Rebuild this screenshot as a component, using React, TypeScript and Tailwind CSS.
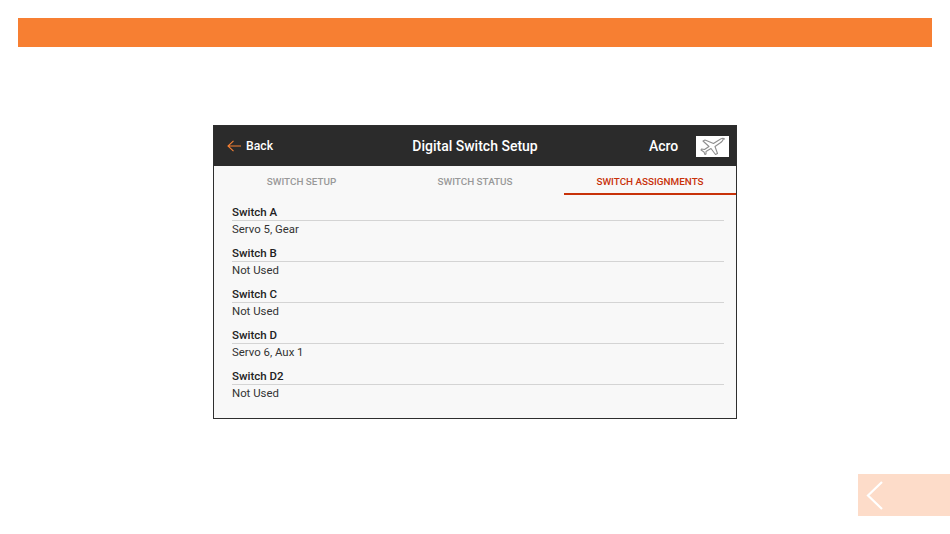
import React from 'react';

const rows = [
    {name: 'Switch A', value: 'Servo 5, Gear'},
    {name: 'Switch B', value: 'Not Used'},
    {name: 'Switch C', value: 'Not Used'},
    {name: 'Switch D', value: 'Servo 6, Aux 1'},
    {name: 'Switch D2', value: 'Not Used'},
];

const App: React.FC = () => {
    return (
        <div className="w-[950px] h-[534px] bg-white flex flex-col overflow-hidden font-['Roboto',sans-serif]">
            {/* Orange title bar */}
            <div className="mt-[18px] mx-[18px] h-[29px] bg-[#f77f32] shrink-0"/>

            {/* Device screen */}
            <div className="mt-[78px] ml-[213px] w-[524px] h-[294px] border-[1.5px] border-[#2e2e2e] bg-[#f8f8f8] flex flex-col shrink-0">
                <header className="h-[40px] bg-[#2b2b2b] flex items-center shrink-0 text-white">
                    <div className="w-[160px] flex items-center pl-[13px] gap-[5px]">
                        <svg width="14" height="12" viewBox="0 0 14 12" fill="none" stroke="#f78033" strokeWidth="1.1">
                            <path d="M14 6H1M6.500 .8 1 6l5.500 5.200"/>
                        </svg>
                        <span className="text-[12.2px] font-medium">Back</span>
                    </div>
                    <div className="w-[202px] text-center text-[14px] font-medium whitespace-nowrap">Digital Switch Setup</div>
                    <div className="flex-1 flex items-center">
                        <span className="ml-[73px] text-[14px] font-medium">Acro</span>
                        <div className="ml-[18px] w-[33px] h-[21px] bg-white flex items-center justify-center">
                            <svg width="26" height="18" viewBox="0 0 26 18" fill="none" stroke="#8f8f8f" strokeWidth="1.1" strokeLinejoin="round">
                                <path d="M24.500 2c-1-1-3.500-.5-5.500 1l-5.500 3.500L5 3 3 4l6 5.500-4.500 3-3-.5-.5 1 3 2 1 2.500 1-.5 0-2.500 5-3 4.500 6 2-1-2.500-7 5-3.500c2-1.500 3.500-3 3-4z"/>
                            </svg>
                        </div>
                    </div>
                </header>

                <nav className="h-[29px] flex shrink-0 text-[9.9px] font-medium">
                    <div className="w-[175px] pt-[9px] text-center text-[#999999]">SWITCH SETUP</div>
                    <div className="w-[175px] pt-[9px] pr-[3px] text-center text-[#999999]">SWITCH STATUS</div>
                    <div className="flex-1 pt-[9px] text-center text-[#c8320a] border-b-2 border-[#c8320a]">SWITCH ASSIGNMENTS</div>
                </nav>

                <div className="pl-[18px] pr-[12px] pt-[9px] flex flex-col gap-[7px]">
                    {rows.map(row => (
                        <div key={row.name} className="h-[34px]">
                            <div className="h-[17px] pt-[1px] text-[11.5px] leading-[15px] font-medium text-[#222222] border-b-[1.5px] border-[#d4d4d4]">{row.name}</div>
                            <div className="pt-[1px] text-[11.4px] leading-[14px] text-[#333333]">{row.value}</div>
                        </div>
                    ))}
                </div>
            </div>

            {/* Previous page button */}
            <div className="mt-[55px] ml-[858px] w-[92px] h-[42px] bg-[#fddcc9] flex items-center pl-[8px] shrink-0">
                <svg width="18" height="30" viewBox="0 0 18 30" fill="none" stroke="#ffffff" strokeWidth="2.2">
                    <path d="M16 2 2 15.500 16 29"/>
                </svg>
            </div>
        </div>
    );
};

export default App;
